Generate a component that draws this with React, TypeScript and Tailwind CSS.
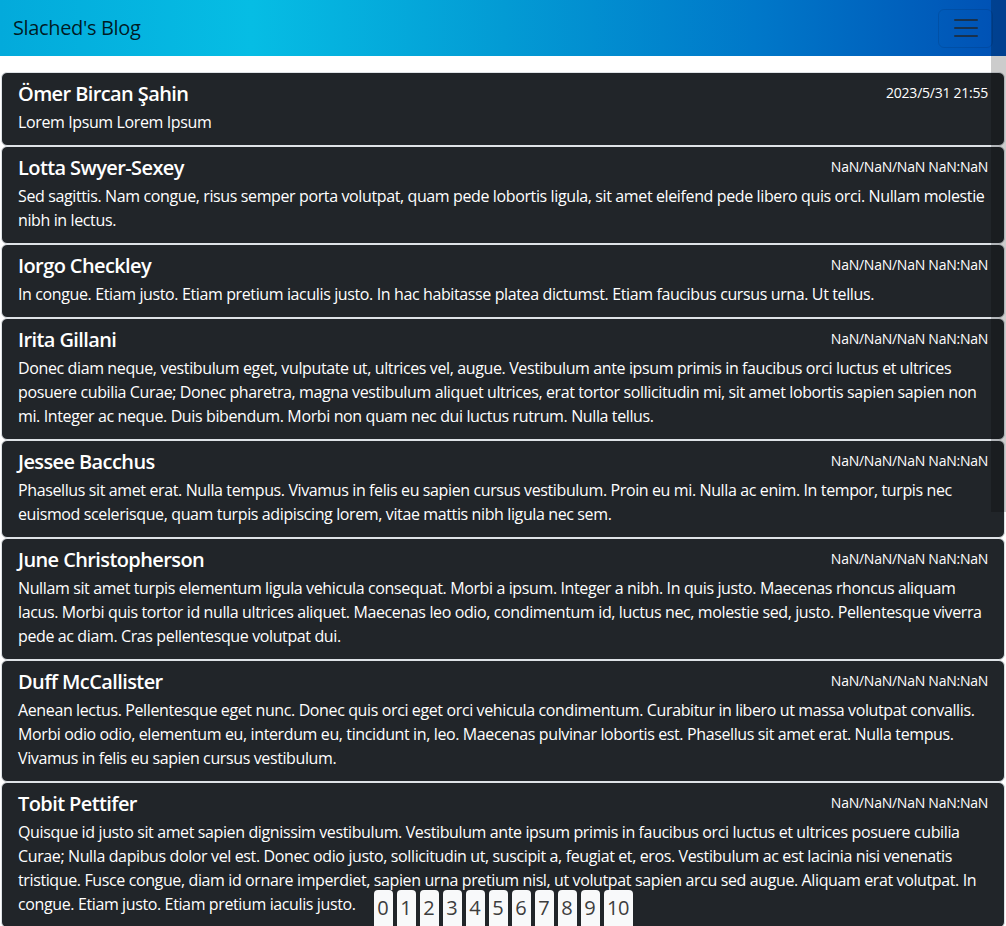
import React from "react";

type Post = { name: string; date: string; lines: string[] };

const NAN = "NaN/NaN/NaN NaN:NaN";

const posts: Post[] = [
  { name: "Ömer Bircan Şahin", date: "2023/5/31 21:55", lines: ["Lorem Ipsum Lorem Ipsum"] },
  {
    name: "Lotta Swyer-Sexey",
    date: NAN,
    lines: [
      "Sed sagittis. Nam congue, risus semper porta volutpat, quam pede lobortis ligula, sit amet eleifend pede libero quis orci. Nullam molestie",
      "nibh in lectus.",
    ],
  },
  {
    name: "Iorgo Checkley",
    date: NAN,
    lines: ["In congue. Etiam justo. Etiam pretium iaculis justo. In hac habitasse platea dictumst. Etiam faucibus cursus urna. Ut tellus."],
  },
  {
    name: "Irita Gillani",
    date: NAN,
    lines: [
      "Donec diam neque, vestibulum eget, vulputate ut, ultrices vel, augue. Vestibulum ante ipsum primis in faucibus orci luctus et ultrices",
      "posuere cubilia Curae; Donec pharetra, magna vestibulum aliquet ultrices, erat tortor sollicitudin mi, sit amet lobortis sapien sapien non",
      "mi. Integer ac neque. Duis bibendum. Morbi non quam nec dui luctus rutrum. Nulla tellus.",
    ],
  },
  {
    name: "Jessee Bacchus",
    date: NAN,
    lines: [
      "Phasellus sit amet erat. Nulla tempus. Vivamus in felis eu sapien cursus vestibulum. Proin eu mi. Nulla ac enim. In tempor, turpis nec",
      "euismod scelerisque, quam turpis adipiscing lorem, vitae mattis nibh ligula nec sem.",
    ],
  },
  {
    name: "June Christopherson",
    date: NAN,
    lines: [
      "Nullam sit amet turpis elementum ligula vehicula consequat. Morbi a ipsum. Integer a nibh. In quis justo. Maecenas rhoncus aliquam",
      "lacus. Morbi quis tortor id nulla ultrices aliquet. Maecenas leo odio, condimentum id, luctus nec, molestie sed, justo. Pellentesque viverra",
      "pede ac diam. Cras pellentesque volutpat dui.",
    ],
  },
  {
    name: "Duff McCallister",
    date: NAN,
    lines: [
      "Aenean lectus. Pellentesque eget nunc. Donec quis orci eget orci vehicula condimentum. Curabitur in libero ut massa volutpat convallis.",
      "Morbi odio odio, elementum eu, interdum eu, tincidunt in, leo. Maecenas pulvinar lobortis est. Phasellus sit amet erat. Nulla tempus.",
      "Vivamus in felis eu sapien cursus vestibulum.",
    ],
  },
  {
    name: "Tobit Pettifer",
    date: NAN,
    lines: [
      "Quisque id justo sit amet sapien dignissim vestibulum. Vestibulum ante ipsum primis in faucibus orci luctus et ultrices posuere cubilia",
      "Curae; Nulla dapibus dolor vel est. Donec odio justo, sollicitudin ut, suscipit a, feugiat et, eros. Vestibulum ac est lacinia nisi venenatis",
      "tristique. Fusce congue, diam id ornare imperdiet, sapien urna pretium nisl, ut volutpat sapien arcu sed augue. Aliquam erat volutpat. In",
      "congue. Etiam justo. Etiam pretium iaculis justo.",
    ],
  },
];

const pages = ["0", "1", "2", "3", "4", "5", "6", "7", "8", "9", "10"];

export default function App() {
  return (
    <div
      className="relative h-[926px] overflow-hidden bg-white"
      style={{ fontFamily: '"Open Sans", "Noto Sans", sans-serif' }}
    >
      <nav className="flex h-14 items-center justify-between bg-[linear-gradient(90deg,#03aadb_0%,#06bde4_25%,#039bd4_50%,#0078c9_75%,#0050b4_100%)] pl-[13px] pr-[13px]">
        <span className="text-[20px] leading-[30px] text-black/85 tracking-[-0.35px]">Slached's Blog</span>
        <button className="flex h-[39px] w-[55px] items-center justify-center rounded-[6px] border border-black/10">
          <svg width="30" height="30" viewBox="0 0 30 30">
            <path d="M4 7h22M4 15h22M4 23h22" stroke="rgba(33,37,41,0.75)" strokeWidth="2" strokeLinecap="round" />
          </svg>
        </button>
      </nav>

      <main className="pt-4">
        {posts.map((p, i) => (
          <div key={i} className="mx-px rounded-[6px] border border-[#dee2e6] bg-[#212529] px-4 pt-[9px] pb-[11px] text-white">
            <div className="mb-1 flex items-start justify-between">
              <h5 className="text-[20px] font-semibold leading-[24px] tracking-[-0.6px]">{p.name}</h5>
              <span className="text-[14px] leading-[21px] tracking-[-0.25px]">{p.date}</span>
            </div>
            <div className="text-[16px] leading-[24px] tracking-[-0.38px]">
              {p.lines.map((l, j) => (
                <div key={j} className="whitespace-nowrap">
                  {l}
                </div>
              ))}
            </div>
          </div>
        ))}
      </main>

      <div className="absolute left-0 right-0 top-[890px] flex justify-center gap-1">
        {pages.map((n) => (
          <span
            key={n}
            className={`h-[40px] rounded-[4px] bg-[#f8f9fa] pt-[3px] text-center text-[20px] leading-[30px] text-[#3d3d3d] ${
              n.length > 1 ? "w-[29px] tracking-[-0.5px]" : "w-[19px]"
            }`}
          >
            {n}
          </span>
        ))}
      </div>

      <div className="pointer-events-none absolute right-0 top-0 h-[512px] w-[15px] bg-black/20" />
    </div>
  );
}
